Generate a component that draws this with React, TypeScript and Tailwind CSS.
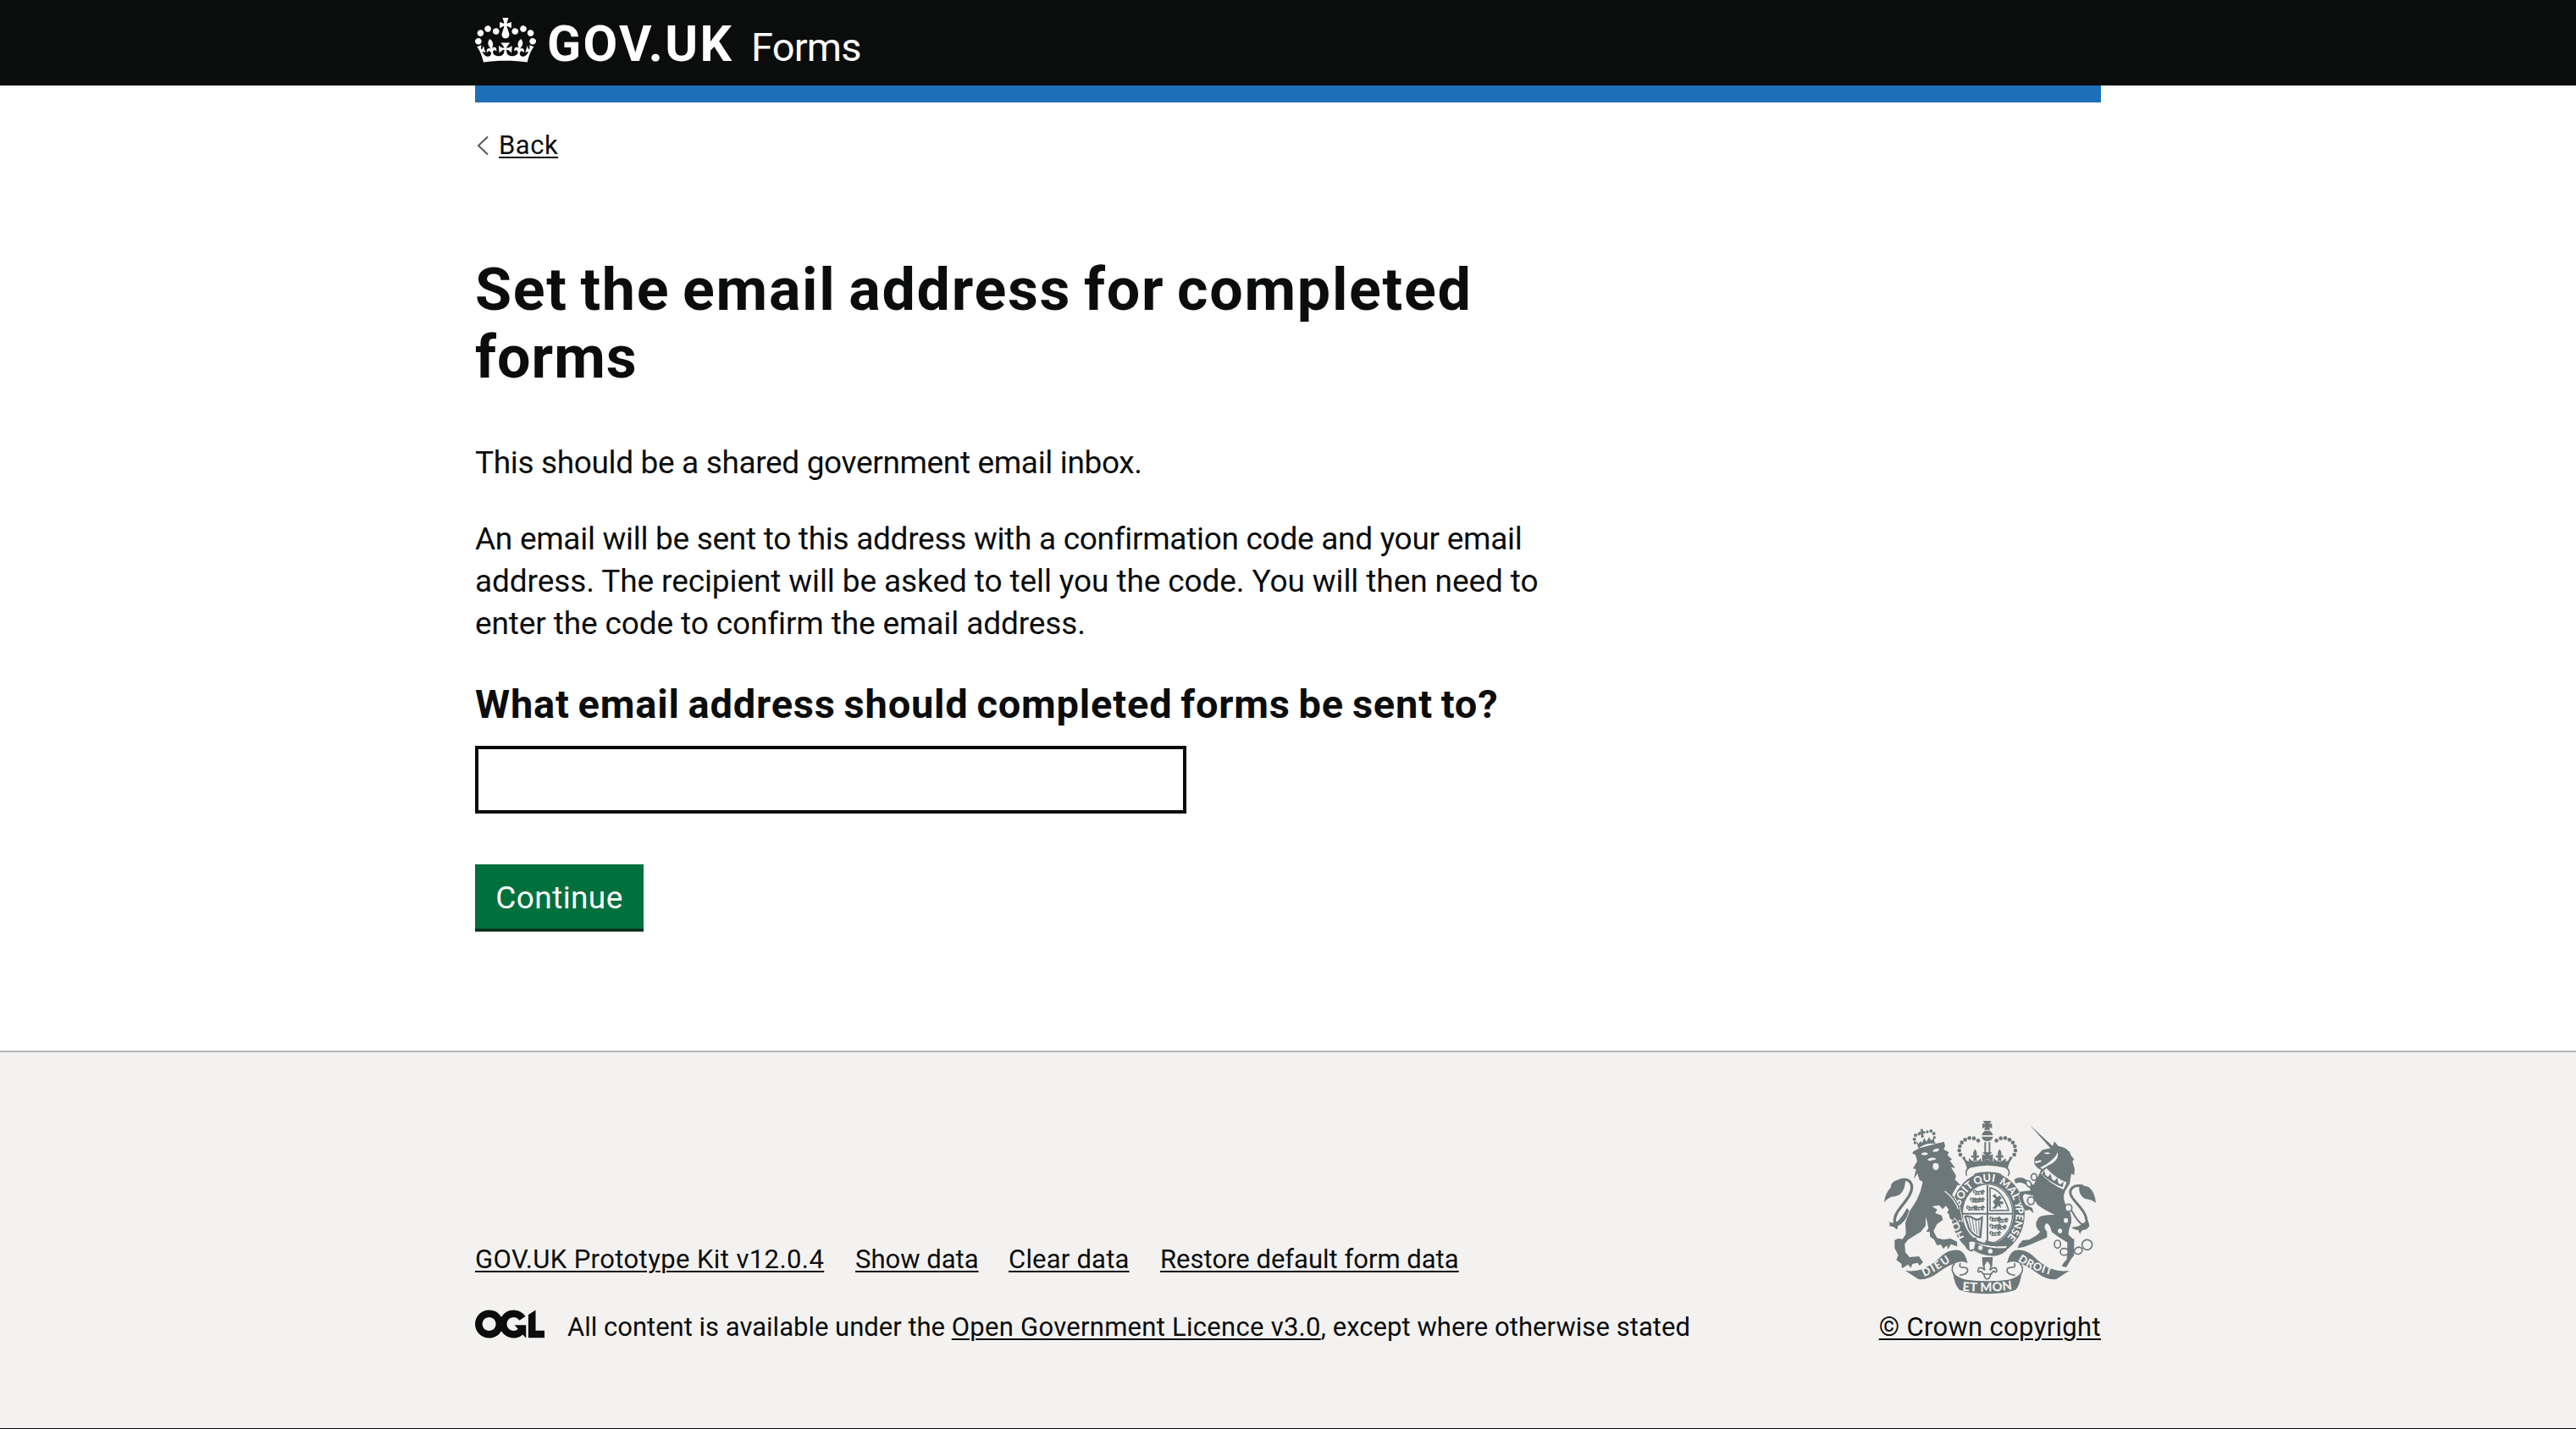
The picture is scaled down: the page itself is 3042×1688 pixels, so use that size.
import type { ReactNode } from "react";

const INK = "#6d787a";
const PAPER = "#f3f2f1";

function CrownLogo() {
  return (
    <svg viewBox="0 0 132 97" className="h-[53px] w-[72px]" fill="currentColor" fillRule="evenodd" aria-hidden="true">
      <path d="M25 30.2c3.5 1.5 7.7-.2 9.1-3.7 1.5-3.6-.2-7.8-3.9-9.2-3.6-1.4-7.6.3-9.1 3.9-1.4 3.5.3 7.5 3.9 9zM9 39.5c3.6 1.5 7.8-.2 9.2-3.7 1.5-3.6-.2-7.8-3.9-9.1-3.6-1.5-7.6.2-9.1 3.8-1.4 3.5.3 7.5 3.8 9zM4.4 57.2c3.5 1.5 7.7-.2 9.1-3.8 1.5-3.6-.2-7.7-3.9-9.1-3.5-1.5-7.6.3-9.1 3.8-1.4 3.5.3 7.6 3.9 9.1zm38.3-21.4c3.5 1.5 7.7-.2 9.1-3.8 1.5-3.6-.2-7.7-3.9-9.1-3.6-1.5-7.6.3-9.1 3.8-1.3 3.6.4 7.7 3.9 9.1zm64.4-5.6c-3.6 1.5-7.8-.2-9.1-3.7-1.5-3.6.2-7.8 3.8-9.2 3.6-1.4 7.7.3 9.2 3.9 1.3 3.5-.4 7.5-3.9 9zm15.9 9.3c-3.6 1.5-7.7-.2-9.1-3.7-1.5-3.6.2-7.8 3.7-9.1 3.6-1.5 7.7.2 9.2 3.8 1.5 3.5-.3 7.5-3.8 9zm4.7 17.7c-3.6 1.5-7.8-.2-9.2-3.8-1.5-3.6.2-7.7 3.9-9.1 3.6-1.5 7.7.3 9.2 3.8 1.3 3.5-.4 7.6-3.9 9.1zM89.3 35.8c-3.6 1.5-7.8-.2-9.2-3.8-1.4-3.6.2-7.7 3.9-9.1 3.6-1.5 7.7.3 9.2 3.8 1.4 3.6-.3 7.7-3.9 9.1zM69.7 17.7l8.9 4.7V9.3l-8.9 2.8c-.2-.3-.5-.6-.9-.9L72.4 0H59.6l3.5 11.2c-.3.3-.6.5-.9.9l-8.8-2.8v13.1l8.8-4.7c.3.3.6.7.9.9l-5 15.4v.1c-.2.8-.4 1.6-.4 2.4 0 4.1 3.1 7.5 7 8.1h.2c.3 0 .7.1 1 .1.4 0 .7 0 1-.1h.2c4-.6 7.1-4.1 7.1-8.1 0-.8-.1-1.7-.4-2.4V34l-5.1-15.4c.4-.2.7-.6 1-.9zM66 92.8c16.9 0 32.8 1.1 47.1 3.2 4-16.9 8.9-26.7 14-33.5l-9.6-3.4c1 4.9 1.1 7.2 0 10.2-1.5-1.4-3-4.3-4.2-8.7L108.6 76c2.8-2 5-3.2 7.5-3.3-4.4 9.4-10 11.9-13.6 11.2-4.3-.8-6.3-4.6-5.6-7.9 1-4.7 5.7-5.9 8-.5 4.3-8.7-3-11.4-7.6-8.8 7.1-7.2 7.9-13.5 2.1-21.1-8 6.1-8.1 12.3-4.5 20.8-4.7-5.4-12.1-2.5-9.5 6.2 3.4-5.2 7.9-2 7.2 3.1-.6 4.3-6.4 7.8-13.5 7.2-10.3-.9-10.9-8-11.2-13.8 2.5-.5 7.1 1.8 11 7.3L80.2 60c-4.1 4.4-8 5.3-12.3 5.4 1.4-4.4 8-11.6 8-11.6H55.5s6.4 7.2 7.9 11.6c-4.2-.1-8-1-12.3-5.4l1.4 16.4c3.9-5.5 8.5-7.7 10.9-7.3-.3 5.8-.9 12.8-11.1 13.8-7.2.6-12.9-2.9-13.5-7.2-.7-5 3.8-8.3 7.1-3.1 2.7-8.7-4.6-11.6-9.4-6.2 3.7-8.5 3.6-14.7-4.6-20.8-5.8 7.6-5 13.9 2.2 21.1-4.7-2.6-11.9.1-7.7 8.8 2.3-5.5 7.1-4.2 8.1.5.7 3.3-1.3 7.1-5.7 7.9-3.5.7-9-1.8-13.5-11.2 2.5.1 4.7 1.3 7.5 3.3l-4.7-15.4c-1.2 4.4-2.7 7.2-4.3 8.7-1.1-3-.9-5.3 0-10.2l-9.5 3.4c5 6.9 9.9 16.7 14 33.5 14.8-2.1 30.8-3.2 47.7-3.2z" />
    </svg>
  );
}

function OglLogo() {
  return (
    <svg viewBox="0 0 483.2 195.7" className="h-[34px] w-[82px]" fill="currentColor" aria-label="OGL">
      <path d="M421.5 142.8V.1l-50.7 32.3v161.1h112.4v-50.7zm-122.3-9.6A47.12 47.12 0 0 1 221 97.8c0-26 21.1-47.1 47.1-47.1 16.7 0 31.4 8.7 39.7 21.8l42.7-27.2A97.63 97.63 0 0 0 268.1 0c-36.5 0-68.3 20.1-85.1 49.7A98 98 0 0 0 97.8 0C43.9 0 0 43.9 0 97.8s43.9 97.8 97.8 97.8c36.5 0 68.3-20.1 85.1-49.7a97.76 97.76 0 0 0 149.6 25.4l19.4 22.2h3v-87.8h-80l24.3 27.5zM97.8 145c-26 0-47.1-21.1-47.1-47.1s21.1-47.1 47.1-47.1 47.1 21.1 47.1 47.1S123.8 145 97.8 145z" />
    </svg>
  );
}

const pearls: [number, number][] = [
  [408, 139], [393, 131], [377, 130], [362, 136], [350, 146], [343, 159], [341, 174], [345, 189],
];

function HalfCrown() {
  return (
    <g>
      {pearls.map(([x, y]) => (
        <circle key={x} cx={x} cy={y} r="7" />
      ))}
      <path d="M397 169 Q407 183 402 193 Q412 186 411 199 Q403 196 402 203 L404 210 L390 210 L392 203 Q391 196 383 199 Q382 186 392 193 Q387 183 397 169Z" />
      <path d="M350 199 L361 195 Q362 212 376 213 Q372 200 379 203 Q384 212 397 212 Q412 212 414 203 Q420 201 418 213 Q430 212 441 205 L441 224 Q400 225 369 243 Q366 218 350 199Z" />
    </g>
  );
}

function Leopard({ x, y }: { x: number; y: number }) {
  return (
    <g transform={`translate(${x} ${y})`} fill="none" stroke={INK} strokeWidth="4.6" strokeLinecap="round">
      <path d="M3 3 Q-3 8 2 12 M8 9 L27 7 M7 5 L11 9 M27 8 L33 3 L37 8 L31 10 M10 10 L7 17 L13 17 M18 9 L17 16 L22 17 M27 9 L29 16 L35 15" />
    </g>
  );
}

function RoyalArms() {
  return (
    <svg viewBox="75 66 750 618" className="h-[206px] w-[250px]" fill={INK} aria-label="Royal coat of arms">
      <defs>
        <path id="garter" d="M360 484 A110 126 0 0 1 443 284 A110 126 0 0 1 500 302" />
        <path id="garter-right" d="M443 284 A98 114 0 0 1 486 501" />
        <path id="scroll-left" d="M217 621 Q268 599 330 553" />
        <path id="scroll-mid" d="M352 671 Q440 679 535 666" />
        <path id="scroll-right" d="M548 564 Q600 602 692 622" />
      </defs>

      {/* Lion's tail */}
      <path d="M75 358 Q78 325 98 306 Q98 288 118 280 Q140 270 150 281 Q148 330 112 337 Q90 338 75 358Z" />
      <path d="M128 281 C165 268 184 292 166 330 C145 370 105 395 113 432" fill="none" stroke={INK} strokeWidth="10" />
      <path d="M88 424 Q103 438 126 422 Q142 404 156 378 L168 392 Q150 425 122 444 Q126 450 118 454 Q112 443 92 442 Q100 435 88 424Z" />

      {/* Garter */}
      <ellipse cx="443" cy="398" rx="110" ry="127" fill="none" stroke={INK} strokeWidth="40" />
      <ellipse cx="441" cy="398" rx="89" ry="105" fill={PAPER} stroke={INK} strokeWidth="4" />

      {/* Shield quarters */}
      <path d="M441 296 V496 M354 398 H529" stroke={INK} strokeWidth="6" fill="none" />
      <Leopard x={392} y={312} />
      <Leopard x={381} y={339} />
      <Leopard x={368} y={368} />
      <Leopard x={392} y={339} />
      <Leopard x={392} y={368} />
      <Leopard x={450} y={407} />
      <Leopard x={450} y={432} />
      <Leopard x={450} y={458} />
      <Leopard x={476} y={411} />
      <Leopard x={470} y={436} />
      <path d="M450 306 Q495 315 516 386 L450 387Z" fill="none" stroke={INK} strokeWidth="5" />
      <path d="M458 379 L468 368 L460 355 L470 345 L458 335 L468 328 L475 340 L484 334 L492 342 L483 352 L498 356 L494 366 L486 362 L490 378 L478 370 L470 380Z" />
      <path d="M362 408 L376 452 Q392 478 416 482 L422 410 Q408 426 392 415 Q378 405 362 408Z" fill="none" stroke={INK} strokeWidth="7" strokeLinejoin="round" />
      <path d="M375 413 L385 455 M387 417 L395 464 M399 421 L404 470 M410 422 L412 474" stroke={INK} strokeWidth="3" />

      <g fill={PAPER} fontFamily="Lato, 'Liberation Sans', sans-serif" fontWeight="900" fontSize="38">
        <text>
          <textPath href="#garter" startOffset="2">HO</textPath>
        </text>
        <text>
          <textPath href="#garter" startOffset="118">SOIT</textPath>
        </text>
        <text>
          <textPath href="#garter" startOffset="210">QUI</textPath>
        </text>
        <text>
          <textPath href="#garter-right" startOffset="38">MAL Y</textPath>
        </text>
        <text fontSize="37">
          <textPath href="#garter-right" startOffset="145">PENSE</textPath>
        </text>
      </g>

      {/* Buckle and strap */}
      <path d="M376 492 Q440 520 510 512 L488 552 Q430 556 378 528Z" fill={PAPER} />
      <path d="M398 500 Q450 527 516 518 Q498 545 462 548 Q420 546 392 528Z" />
      <circle cx="416" cy="519" r="8" fill={PAPER} />
      <circle cx="451" cy="531" r="8" fill={PAPER} />
      <path d="M402 488 Q388 481 385 494 Q365 494 372 507 Q360 516 374 524 Q384 534 392 524" fill="none" stroke={INK} strokeWidth="6" />
      <path d="M434 493 L460 498 L478 515 L432 508Z" />

      {/* Imperial crown */}
      <path d="M425 69 L455 69 L447 81 L457 77 L457 96 L447 91 L451 101 L429 101 L433 91 L423 96 L423 77 L433 81Z" />
      <path d="M432 104 L448 104 Q459 110 460 120 L421 120 Q422 110 432 104Z" />
      <path d="M420 125 L461 125 Q457 141 440 141 Q424 141 420 125Z" />
      <path d="M433 144 V180 M448 144 V180" stroke={INK} strokeWidth="6" />
      <path d="M424 180 L457 180 L447 193 L460 187 L460 214 L441 204 L422 214 L422 187 L434 193Z" />
      <HalfCrown />
      <g transform="matrix(-1 0 0 1 881 0)">
        <HalfCrown />
      </g>
      <path d="M380 258 Q376 249 386 246 Q441 231 498 246 Q507 249 502 258" fill="none" stroke={INK} strokeWidth="33" />
      <path d="M380 260 Q376 249 386 246 Q441 231 498 246 Q507 249 502 260" fill="none" stroke={PAPER} strokeWidth="23" />

      {/* Lion */}
      <path
        stroke={PAPER}
        strokeWidth="5"
        paintOrder="stroke"
        d="M174 184 L180 176 L200 166 L250 152 L287 143 L291 158 L286 170 L305 181 L299 190 L316 207 L307 209 L327 236 L312 233 L330 264 L326 277 L346 298 L335 296 L316 330 L340 368 L347 400 L352 424 L340 420 L337 428 L325 412 L318 422 L308 415 L304 400 L298 394 L304 384 L294 370 L282 382 L270 368 L245 372 L263 383 L256 396 L279 404 L283 420 L262 435 L250 460 L262 484 L285 490 L310 486 L333 497 L334 514 L322 510 L312 506 L300 524 L298 510 L284 522 L276 508 L262 510 L252 490 L238 480 L236 462 L224 462 L232 450 L228 430 L222 408 L222 440 L205 462 L160 490 L148 505 L150 535 L165 552 L198 549 L213 570 L200 582 L194 572 L175 576 L170 590 L160 578 L138 592 L136 575 L118 562 L125 545 L112 520 L112 492 L125 486 L140 488 L152 470 L150 430 L165 390 L190 350 L203 320 L212 285 L200 278 L193 255 L180 275 L188 240 L177 238 L192 212 L186 190Z"
      />
      <path d="M205 186 Q218 176 231 185 Q219 196 205 186Z M245 176 Q256 164 270 168 Q266 184 245 176Z M228 206 Q242 194 260 203 Q252 210 244 208 Q238 214 228 206Z M249 222 Q256 214 267 222 Q273 240 258 244 Q243 240 249 222Z" fill={PAPER} />
      <path d="M290 318 Q325 345 338 382" fill="none" stroke={PAPER} strokeWidth="4" />
      {/* Lion's crown */}
      <path d="M195 164 Q220 142 256 147" fill="none" stroke={INK} strokeWidth="6" />
      <path d="M187 140 L197 150 L204 140 L209 148 L217 130 L225 143 L234 126 L240 138 L253 130 L252 145 Q220 143 196 161Z" />
      <path d="M203 98 L213 98 L212 106 L220 105 L221 113 L213 114 L216 127 L206 130 L206 116 L198 116 L198 108 L205 107Z" />
      <g>
        <circle cx="182" cy="134" r="6" />
        <circle cx="186" cy="120" r="6" />
        <circle cx="198" cy="116" r="5" />
        <circle cx="184" cy="147" r="5" />
        <circle cx="228" cy="108" r="5" />
        <circle cx="241" cy="105" r="6" />
        <circle cx="251" cy="114" r="6" />
        <circle cx="253" cy="128" r="5" />
      </g>

      {/* Unicorn's tail */}
      <path d="M825 360 Q822 322 800 304 Q785 296 766 299 Q762 332 787 345 Q812 348 825 360Z" />
      <path d="M780 300 C745 293 722 312 742 342 C765 375 802 398 790 446" fill="none" stroke={INK} strokeWidth="9" />
      <path d="M730 372 C748 400 754 420 776 436" fill="none" stroke={INK} strokeWidth="6" />
      <path d="M802 442 Q794 456 778 456 Q770 462 770 470 Q762 464 764 456 Q750 458 738 446 Q765 446 778 432 Q792 430 790 412 Q802 430 802 442Z" />

      {/* Unicorn */}
      <path
        stroke={PAPER}
        strokeWidth="4"
        paintOrder="stroke"
        d="M591 84 L672 158 L678 142 L692 158 Q730 164 736 190 L748 206 L742 212 L750 240 L748 262 L738 256 L732 292 L716 318 Q704 345 722 372 Q742 400 738 430 Q728 455 728 472 L742 486 L748 488 L748 545 L738 558 L720 588 L704 584 L712 570 L722 560 L724 500 Q690 480 668 462 Q664 436 650 432 Q636 444 652 462 L652 482 L592 508 L570 516 L548 520 L552 508 L566 492 L590 490 L616 474 L628 462 Q600 440 624 410 Q640 400 680 402 Q640 384 618 366 Q606 350 602 334 L572 328 Q560 340 576 366 L600 378 L604 396 L590 384 L574 388 L560 360 Q548 336 556 320 L594 316 L588 302 Q568 286 552 288 L540 290 L536 276 Q552 266 570 272 L604 296 L618 270 L632 242 Q616 240 606 218 L608 200 L636 172 L664 166Z"
      />
      <path d="M640 184 Q652 178 664 184 Q656 190 640 184Z M690 180 Q694 205 672 218 Q652 228 636 240 L628 234 Q655 222 672 205 Q684 195 690 180Z M606 214 L630 208 L632 214 L612 220Z" fill={PAPER} />
      {/* Collar */}
      <path d="M640 246 Q672 282 716 300" fill="none" stroke={PAPER} strokeWidth="28" />
      <path d="M630 264 Q670 302 712 316 M628 260 L632 240 M710 316 L724 292" fill="none" stroke={INK} strokeWidth="3.5" />
      <path d="M634 258 L642 245 L647 262 L656 268 L664 256 L670 277 L679 282 L688 270 L692 290 L700 294 L711 284 L708 304 Q665 290 634 258Z" />
      {/* Chain */}
      <g fill={PAPER} stroke={INK} strokeWidth="5">
        <ellipse cx="606" cy="268" rx="10" ry="12" />
        <ellipse cx="587" cy="292" rx="8" ry="12" transform="rotate(-30 587 292)" />
        <ellipse cx="595" cy="352" rx="12" ry="14" />
        <ellipse cx="728" cy="377" rx="12" ry="13" />
        <ellipse cx="719" cy="422" rx="10" ry="11" />
        <ellipse cx="698" cy="459" rx="10" ry="11" />
        <ellipse cx="689" cy="506" rx="11" ry="14" />
        <ellipse cx="713" cy="533" rx="14" ry="12" />
        <ellipse cx="763" cy="529" rx="14" ry="12" transform="rotate(-25 763 529)" />
        <circle cx="794" cy="508" r="18" />
      </g>

      {/* Fleur-de-lis badge */}
      <path d="M422 552 L460 552 L458 585 L424 585Z" />
      <path d="M441 563 Q460 580 449 598 Q472 578 474 602 Q470 608 464 602 Q456 604 455 612 L452 612 Q450 628 440 630 Q430 628 429 612 L426 612 Q424 604 416 602 Q410 608 407 602 Q410 578 432 598 Q422 580 441 563Z" fill={PAPER} stroke={INK} strokeWidth="5" />
      <path d="M426 612 H455" stroke={INK} strokeWidth="4.5" />

      {/* Scroll */}
      <g fill="none" stroke={INK} strokeWidth="5">
        <path d="M325 574 Q308 592 322 612 M345 573 Q338 590 354 588 Q372 588 371 600 Q368 614 342 616" />
        <path d="M556 574 Q573 592 559 612 M536 573 Q543 590 527 588 Q509 588 510 600 Q513 614 539 616" />
      </g>
      <path d="M150 600 Q185 604 212 594 Q250 578 280 546 Q310 522 342 528 Q362 534 371 574 Q352 562 326 574 Q296 584 262 610 Q230 634 196 630Z" />
      <path d="M731 600 Q696 604 669 594 Q631 578 601 546 Q571 522 539 528 Q519 534 510 574 Q529 562 555 574 Q585 584 619 610 Q651 634 685 630Z" />
      <path d="M318 604 Q334 626 366 632 Q441 642 515 632 Q547 626 563 604 Q556 656 540 668 Q500 682 441 682 Q380 682 342 668 Q324 652 318 604Z" />
      <g fill={PAPER} fontFamily="Lato, 'Liberation Sans', sans-serif" fontWeight="900" fontSize="39">
        <text letterSpacing="5">
          <textPath href="#scroll-left">DIEU</textPath>
        </text>
        <text fontSize="44" letterSpacing="1">
          <textPath href="#scroll-mid">ET MON</textPath>
        </text>
        <text letterSpacing="2">
          <textPath href="#scroll-right">DROIT</textPath>
        </text>
      </g>
    </svg>
  );
}

function Link({ className, children }: { className: string; children: ReactNode }) {
  return (
    <a href="#" className={`whitespace-nowrap underline decoration-2 underline-offset-[3px] ${className}`}>
      {children}
    </a>
  );
}

export default function App() {
  return (
    <div className="flex h-[1688px] flex-col bg-white font-['Roboto','Liberation_Sans',sans-serif] text-[#0b0c0c]">
      <header className="h-[101px] bg-[#0b0c0c] text-white">
        <div className="mx-auto flex w-[1920px] pt-[21px]">
          <CrownLogo />
          <span className="ml-[13px] w-[231px] text-[59px] leading-[62px] font-bold tracking-[2.4px] whitespace-nowrap">
            GOV.UK
          </span>
          <span className="ml-[10px] pt-[3px] text-[47px] leading-[64px] tracking-[-0.8px] whitespace-nowrap">Forms</span>
        </div>
      </header>

      <div className="mx-auto h-5 w-[1920px] bg-[#1d70b8]" />

      <main className="mx-auto w-[1920px] flex-1 pt-[31px]">
        <div className="flex items-center text-[31px] leading-10">
          <svg viewBox="0 0 14 24" className="ml-[2px] h-6 w-[14px]" fill="none" stroke="#505a5f" strokeWidth="2">
            <path d="M13 1.5 L2 12 L13 22.5" />
          </svg>
          <Link className="ml-3 tracking-[0.5px]">Back</Link>
        </div>

        <h1 className="mt-[110px] text-[70px] leading-[80px] font-bold tracking-[1px]">
          <span className="tracking-[1.7px] [word-spacing:-4.3px]">Set the email address for completed</span>
          <br />
          forms
        </h1>

        <p className="mt-[60px] text-[37px] leading-[50px] tracking-[-0.35px]">
          This should be a shared government email inbox.
        </p>
        <p className="mt-10 text-[37px] leading-[50px] whitespace-nowrap">
          <span className="tracking-[-0.29px]">An email will be sent to this address with a confirmation code and your email</span>
          <br />
          <span className="tracking-[-0.1px]">address. The recipient will be asked to tell you the code. You will then need to</span>
          <br />
          <span className="tracking-[-0.12px]">enter the code to confirm the email address.</span>
        </p>

        <label htmlFor="email" className="mt-10 block text-[47px] leading-[60px] font-bold tracking-[0.8px] [word-spacing:-2.6px]">
          What email address should completed forms be sent to?
        </label>
        <input id="email" type="email" className="mt-[19px] block h-20 w-[840px] border-4 border-[#0b0c0c] bg-white px-2 text-[37px] outline-none" />

        <button className="mt-[60px] block h-[76px] w-[199px] bg-[#00703c] pt-[2px] text-[37px] leading-[76px] tracking-[0.4px] text-white shadow-[0_3.5px_0_#002d18]">
          Continue
        </button>
      </main>

      <footer className="h-[447px] border-t-2 border-b border-t-[#b1b4b6] border-b-[#0b0c0c] bg-[#f3f2f1] text-[31px] leading-10">
        <div className="mx-auto flex w-[1920px] justify-between pt-20">
          <div className="pt-[145px]">
            <div className="flex">
              <Link className="w-[412px] tracking-[0.4px]">GOV.UK Prototype Kit v12.0.4</Link>
              <Link className="ml-[37px] w-[145px]">Show data</Link>
              <Link className="ml-9 w-[143px] tracking-[0.2px]">Clear data</Link>
              <Link className="ml-9">Restore default form data</Link>
            </div>
            <div className="mt-10 flex">
              <div className="-mt-px">
                <OglLogo />
              </div>
              <p className="ml-[27px] whitespace-nowrap">
                All content is available under the{" "}
                <Link className="tracking-[0.27px]">Open Government Licence v3.0</Link>
                <span className="tracking-[0.06px]">, except where otherwise stated</span>
              </p>
            </div>
          </div>
          <div className="flex flex-col items-end">
            <div className="mr-1.5 h-[225px]">
              <RoyalArms />
            </div>
            <Link className="tracking-[0.33px]">© Crown copyright</Link>
          </div>
        </div>
      </footer>
    </div>
  );
}
